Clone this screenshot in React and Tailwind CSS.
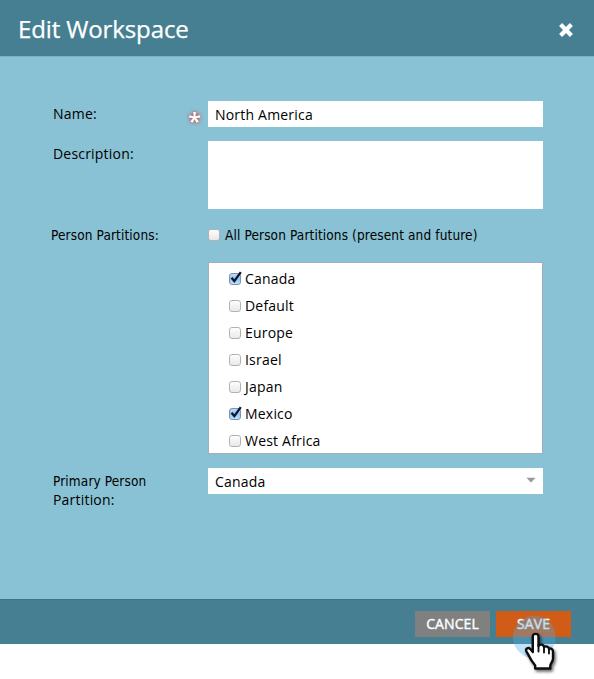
import React from "react";

const partitions = [
  { name: "Canada", checked: true },
  { name: "Default" },
  { name: "Europe" },
  { name: "Israel" },
  { name: "Japan" },
  { name: "Mexico", checked: true },
  { name: "West Africa" },
];

function Checkbox({ checked }) {
  return (
    <svg className="block h-[16px] w-[16px] shrink-0" viewBox="0 0 16 16" fill="none">
      <defs>
        <linearGradient id="boxOff" x1="0" y1="0" x2="0" y2="1">
          <stop offset="0" stopColor="#ffffff" />
          <stop offset="0.45" stopColor="#f4f4f4" />
          <stop offset="1" stopColor="#e8e8e8" />
        </linearGradient>
        <linearGradient id="boxOn" x1="0" y1="0" x2="0" y2="1">
          <stop offset="0" stopColor="#c3dcf4" />
          <stop offset="0.5" stopColor="#94c2ef" />
          <stop offset="1" stopColor="#c4e6fb" />
        </linearGradient>
      </defs>
      <rect
        x="1.5"
        y="2.5"
        width="11"
        height="11"
        rx="2.4"
        fill={checked ? "url(#boxOn)" : "url(#boxOff)"}
        stroke={checked ? "#7d92ab" : "#b2b2b2"}
      />
      {checked && <path d="M3.6 6.8 6.3 10.2 12.8 1.2" stroke="#0a1630" strokeWidth="2.3" />}
    </svg>
  );
}

function Cursor() {
  return (
    <div className="absolute left-[512px] top-[614px] h-[65px] w-[50px]">
      <svg className="h-full w-full" viewBox="0 0 50 65" fill="none">
        <defs>
          <filter id="shade" x="-30%" y="-30%" width="170%" height="170%">
            <feDropShadow dx="1.5" dy="2" stdDeviation="1.5" floodColor="#000" floodOpacity="0.6" />
          </filter>
        </defs>
        <circle cx="22.3" cy="23" r="21.3" fill="#4cb0ec" fillOpacity="0.36" />
        <path
          filter="url(#shade)"
          d="M20.8 38V22.5C20.8 19 26.5 19 26.5 22.5V32C28 29.8 31.8 30.3 32 33.2C33.7 31.5 36.8 32.6 37 35C39 33.8 41 35.2 41 37.6V44.5C41 47.5 38.8 49 38.3 51.5V54.5H23.2V51.5C20.7 48.5 18.7 45.8 17.3 42.6C16.2 40.2 15 38.8 14.3 37.2C13.3 34.6 16.4 33.1 18.3 35Z"
          fill="#fff"
          stroke="#111"
          strokeWidth="2.4"
          strokeLinejoin="round"
        />
        <path d="M26.5 31V37.5M32 33V38.5M37 35V39.5" stroke="#111" strokeWidth="1.9" strokeLinecap="round" />
      </svg>
    </div>
  );
}

export default function App() {
  return (
    <div className="relative h-[679px] w-[594px] overflow-hidden bg-white font-['Open_Sans','Noto_Sans',sans-serif] text-[14px] leading-[19px] tracking-[0.2px] text-black">
      <div className="flex h-[644px] flex-col bg-[#89c2d4]">
        <header className="flex h-[57px] shrink-0 items-center justify-between border-b border-[#79b3c4] bg-[#467f91] pl-[18px] pr-[20px]">
          <h1 className="pt-[2px] text-[24px] leading-[32px] tracking-[-0.12px] text-white [-webkit-text-stroke:0.25px_white]">Edit Workspace</h1>
          <svg className="mt-[4px] h-[16px] w-[16px]" viewBox="0 0 16 16">
            <path d="M2.6 2.6 13.4 13.4M13.4 2.6 2.6 13.4" stroke="#fff" strokeWidth="4.3" />
          </svg>
        </header>

        <main className="flex grow flex-col pl-[53px] pr-[51px] pt-[44px]">
          <div className="flex h-[26px]">
            <label className="w-[135px] pt-[3px]">Name:</label>
            <div className="w-[20px] pt-[4px] text-[24px] font-semibold leading-[31px] text-white [text-shadow:0_0_2px_#c85050,0_0_4px_#b8404a]">*</div>
            <div className="grow bg-white pl-[7px] pt-[4px]">North America</div>
          </div>

          <div className="mt-[14px] flex h-[68px]">
            <label className="w-[155px] pt-[3px]">Description:</label>
            <div className="grow bg-white" />
          </div>

          <div className="mt-[16px] flex h-[19px] items-center font-['DejaVu_Sans_Condensed','DejaVu_Sans',sans-serif] text-[13.5px] tracking-[0.13px]">
            <div className="-ml-[2px] w-[156px] pt-[2px]">Person Partitions:</div>
            <Checkbox />
            <div className="ml-[2px] whitespace-nowrap pt-[1px]">All Person Partitions (present and future)</div>
          </div>

          <div className="ml-[155px] mt-[18px] flex h-[192px] flex-col overflow-hidden border border-[#a3aebd] bg-white pl-[19px] pt-[2px]">
            {partitions.map((p) => (
              <div key={p.name} className="flex h-[27px] shrink-0 items-center">
                <Checkbox checked={p.checked} />
                <div className="ml-[1px]">{p.name}</div>
              </div>
            ))}
          </div>

          <div className="mt-[14px] flex h-[26px]">
            <div className="w-[155px] pt-[4px]">
              <div className="font-['DejaVu_Sans_Condensed','DejaVu_Sans',sans-serif] text-[13.5px] leading-[18px] tracking-[0.13px]">Primary Person</div>
              <div>Partition:</div>
            </div>
            <div className="flex grow justify-between bg-white pl-[7px] pr-[7px] pt-[4px]">
              <div>Canada</div>
              <svg className="mt-[5px] h-[6px] w-[10px]" viewBox="0 0 10 6">
                <path d="M.5 .8H9.5L5 5.5Z" fill="#999" />
              </svg>
            </div>
          </div>
        </main>

        <footer className="flex h-[45px] shrink-0 gap-[6px] border-t border-[#3f7484] bg-[#467f91] pl-[415px] pt-[11px] tracking-[0.1px] text-white [-webkit-text-stroke:0.4px_white]">
          <button className="h-[26px] w-[75px] bg-[#808080] pb-[2px]">CANCEL</button>
          <button className="h-[26px] w-[75px] bg-[#d05c17] pb-[2px]">SAVE</button>
        </footer>
      </div>
      <Cursor />
    </div>
  );
}
